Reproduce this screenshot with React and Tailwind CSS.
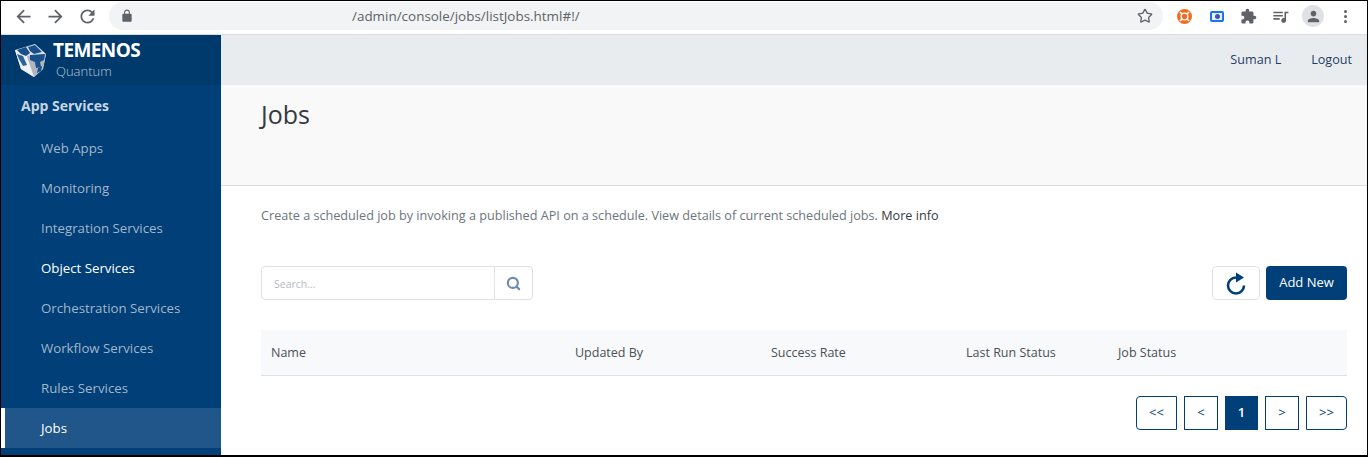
import { Star, Search } from 'lucide-react';

const navItems = [
  { label: 'Web Apps' },
  { label: 'Monitoring' },
  { label: 'Integration Services' },
  { label: 'Object Services', bright: true },
  { label: 'Orchestration Services' },
  { label: 'Workflow Services' },
  { label: 'Rules Services' },
];

function Icon({ d, size, className = '' }) {
  return (
    <svg width={size} height={size} viewBox="0 0 24 24" fill="currentColor" className={`shrink-0 ${className}`}>
      <path d={d} />
    </svg>
  );
}

function Globe() {
  return (
    <svg width="32" height="33" viewBox="0 0 32 33" className="shrink-0">
      <path d="M0 6 L20 0 L31 10 L28 25 L19 33 L6 25 Z" fill="#dfe2e6" />
      <path d="M0 6 L12 12 L19 33 L6 25 Z" fill="#eef0f2" />
      <path d="M12 12 L31 10 L28 25 L19 33 Z" fill="#aeb5be" />
      <path d="M2 6 L11 3 L15 9 L11 12 L6 10 Z" fill="#17508a" />
      <path d="M13 3 L20 1 L27 8 L19 10 L15 7 Z" fill="#17508a" />
      <path d="M15 11 L30 10 L29 16 L25 18 L26 23 L21 24 L20 18 L15 16 Z" fill="#17508a" />
      <path d="M2 10 L8 12 L12 21 L8 22 L4 15 Z" fill="#2a639c" />
      <path d="M23 24 L27 22 L26 27 L22 29 Z" fill="#17508a" />
    </svg>
  );
}

function BrowserBar() {
  return (
    <div className="h-[34px] flex items-start pt-[1px] bg-white border-b border-[#dadce0] shrink-0">
      <div className="flex items-center gap-[11px] pl-[12px] h-[28px] text-[#5f6368]">
        <Icon size={21} d="M20 11H7.83l5.59-5.59L12 4l-8 8 8 8 1.41-1.41L7.83 13H20v-2z" />
        <Icon size={21} d="M12 4l-1.41 1.41L16.17 11H4v2h12.17l-5.58 5.59L12 20l8-8z" />
        <Icon size={21} d="M17.65 6.35C16.2 4.9 14.21 4 12 4c-4.42 0-7.99 3.58-7.99 8s3.57 8 7.99 8c3.73 0 6.84-2.55 7.73-6h-2.08c-.82 2.33-3.04 4-5.65 4-3.31 0-6-2.69-6-6s2.69-6 6-6c1.66 0 3.14.69 4.22 1.78L13 11h7V4l-2.35 2.35z" />
      </div>
      <div className="ml-[11px] h-[28px] w-[1054px] rounded-full bg-[#f1f3f4] flex items-center pl-[11px] relative">
        <Icon size={14} className="text-[#5f6368]" d="M18 8h-1V6c0-2.76-2.24-5-5-5S7 3.24 7 6v2H6c-1.1 0-2 .9-2 2v10c0 1.1.9 2 2 2h12c1.1 0 2-.9 2-2V10c0-1.1-.9-2-2-2zM12 3.1c1.71 0 3.1 1.39 3.1 3.1v1.8H8.9V6.2c0-1.71 1.39-3.1 3.1-3.1z" />
        <span className="ml-[218px] text-[13.45px] text-[#5f6368]">/admin/console/jobs/listJobs.html#!/</span>
        <Star size={16} strokeWidth={2} className="absolute right-[10px] top-[6px] text-[#5f6368]" />
      </div>
      <div className="h-[28px] flex items-center">
        <svg width="15" height="15" viewBox="0 0 16 16" className="ml-[14px] shrink-0">
          <circle cx="8" cy="8" r="8" fill="#ef6c22" />
          <circle cx="8" cy="8" r="3.6" fill="none" stroke="#fff" strokeWidth="1.5" />
          <path d="M3.2 3.2 L5.6 5.6 M12.8 3.2 L10.4 5.6 M3.2 12.8 L5.6 10.4 M12.8 12.8 L10.4 10.4" stroke="#fff" strokeWidth="1.8" />
        </svg>
        <div className="ml-[18px] w-[14px] h-[11px] rounded-[2px] border-2 border-[#1a73e8] bg-[#e8f0fe] flex items-center justify-center">
          <div className="w-[5px] h-[5px] rounded-full bg-[#3f51c5]" />
        </div>
        <Icon size={17} className="ml-[16px] text-[#5f6368]" d="M20.5 11H19V7c0-1.1-.9-2-2-2h-4V3.5C13 2.12 11.88 1 10.5 1S8 2.12 8 3.5V5H4c-1.1 0-1.99.9-1.99 2v3.8H3.5c1.49 0 2.7 1.21 2.7 2.7s-1.21 2.7-2.7 2.7H2V20c0 1.1.9 2 2 2h3.8v-1.5c0-1.49 1.21-2.7 2.7-2.7 1.49 0 2.7 1.21 2.7 2.7V22H17c1.1 0 2-.9 2-2v-4h1.5c1.38 0 2.5-1.12 2.5-2.5S21.88 11 20.5 11z" />
        <Icon size={19} className="ml-[14px] text-[#5f6368]" d="M15 6H3v2h12V6zm0 4H3v2h12v-2zM3 16h8v-2H3v2zM17 6v8.18c-.31-.11-.65-.18-1-.18-1.66 0-3 1.34-3 3s1.34 3 3 3 3-1.34 3-3V8h3V6h-5z" />
        <div className="ml-[12px] w-[22px] h-[22px] rounded-full bg-[#dfe1e5] flex items-center justify-center">
          <Icon size={17} className="text-[#5f6368]" d="M12 12c2.21 0 4-1.79 4-4s-1.79-4-4-4-4 1.79-4 4 1.79 4 4 4zm0 2c-2.67 0-8 1.34-8 4v2h16v-2c0-2.66-5.33-4-8-4z" />
        </div>
        <div className="ml-[20px] flex flex-col gap-[2px]">
          <div className="w-[3px] h-[3px] rounded-full bg-[#5f6368]" />
          <div className="w-[3px] h-[3px] rounded-full bg-[#5f6368]" />
          <div className="w-[3px] h-[3px] rounded-full bg-[#5f6368]" />
        </div>
      </div>
    </div>
  );
}

function Sidebar() {
  return (
    <div className="w-[220px] shrink-0 bg-[#003f78] flex flex-col">
      <div className="h-[50px] bg-[#003a6c] flex items-center pl-[14px]">
        <Globe />
        <div className="ml-[6px] flex flex-col mt-[-1px]">
          <span className="text-[19px] leading-[19px] font-bold text-white tracking-[-0.6px]">TEMENOS</span>
          <span className="text-[13px] leading-[15px] font-light text-[#b9c7d6] ml-[3px] mt-[4px]">Quantum</span>
        </div>
      </div>
      <div className="h-[43px] flex items-center pb-[2px] pl-[20px] text-[14px] font-bold text-[#c9d5e2]">App Services</div>
      {navItems.map((item) => (
        <div
          key={item.label}
          className={`h-[40px] flex items-center pt-[2px] pl-[40px] text-[13.25px] ${item.bright ? 'text-white' : 'text-[#a3b6c9]'}`}
        >
          {item.label}
        </div>
      ))}
      <div className="h-[40px] flex items-center pt-[2px] pl-[36px] text-[13.25px] text-white bg-[#20568a] border-l-[4px] border-white">
        Jobs
      </div>
    </div>
  );
}

function PageBtn({ children, active, className = '' }) {
  return (
    <div
      className={`h-[34px] flex items-center justify-center text-[13px] ${
        active ? 'bg-[#003f78] text-white font-semibold' : 'bg-white text-[#003f78] border border-[#003f78]'
      } ${className}`}
    >
      {children}
    </div>
  );
}

export default function App() {
  return (
    <div className="h-[457px] w-[1368px] border border-black border-b-2 flex flex-col overflow-hidden bg-white font-['Open_Sans',sans-serif]">
      <BrowserBar />
      <div className="flex flex-1 min-h-0">
        <Sidebar />
        <div className="flex-1 flex flex-col min-w-0">
          <div className="h-[50px] bg-[#e9ecef] flex items-center justify-end gap-[30px] pr-[15px] text-[12.6px] text-[#1e3f66] shrink-0">
            <span>Suman L</span>
            <span>Logout</span>
          </div>
          <div className="h-[101px] bg-[#f9f9f9] border-b border-[#d9dcdf] pl-[40px] pt-[10px] shrink-0">
            <h1 className="text-[25px] leading-[38px] text-[#343a40]">Jobs</h1>
          </div>
          <div className="pl-[40px] pr-[20px] flex-1">
            <p className="mt-[19px] h-[21px] text-[12.65px] leading-[20px] text-[#6c757d]">
              Create a scheduled job by invoking a published API on a schedule. View details of current scheduled jobs.{' '}
              <span className="text-[#343a40]">More info</span>
            </p>
            <div className="mt-[40px] flex justify-between items-center h-[34px]">
              <div className="w-[272px] h-[34px] flex border border-[#dee2e6] rounded-[4px]">
                <div className="flex-1 flex items-center pt-[3px] pl-[12px] text-[10.5px] text-[#b5bac0]">Search...</div>
                <div className="w-[38px] flex items-center justify-center border-l border-[#dee2e6]">
                  <Search size={15} strokeWidth={3.5} className="text-[#6c8cab]" />
                </div>
              </div>
              <div className="flex gap-[6px]">
                <div className="w-[48px] h-[34px] border border-[#dee2e6] rounded-[4px] flex items-center justify-center">
                  <svg width="20" height="23" viewBox="0 0 20 23" className="text-[#003f78]">
                    <path d="M10 5.5 A8 8 0 1 0 18 13.5" fill="none" stroke="currentColor" strokeWidth="2.6" />
                    <path d="M10 0.5 L18 5.5 L10 10.5 Z" fill="currentColor" />
                  </svg>
                </div>
                <div className="w-[81px] h-[34px] rounded-[4px] bg-[#003f78] text-white text-[13px] font-medium flex items-center justify-center">
                  Add New
                </div>
              </div>
            </div>
            <div className="mt-[30px] h-[46px] pt-[1px] bg-[#f8f9fa] border-b border-[#dee2e6] flex items-center text-[12.5px] text-[#495057]">
              <span className="pl-[10px] w-[314px]">Name</span>
              <span className="w-[196px]">Updated By</span>
              <span className="w-[195px]">Success Rate</span>
              <span className="w-[152px]">Last Run Status</span>
              <span>Job Status</span>
            </div>
            <div className="mt-[20px] flex justify-end gap-[7px]">
              <PageBtn className="w-[41px] rounded-l-[4px]">&lt;&lt;</PageBtn>
              <PageBtn className="w-[34px]">&lt;</PageBtn>
              <PageBtn active className="w-[33px]">1</PageBtn>
              <PageBtn className="w-[34px]">&gt;</PageBtn>
              <PageBtn className="w-[41px] rounded-r-[4px]">&gt;&gt;</PageBtn>
            </div>
          </div>
        </div>
      </div>
    </div>
  );
}
